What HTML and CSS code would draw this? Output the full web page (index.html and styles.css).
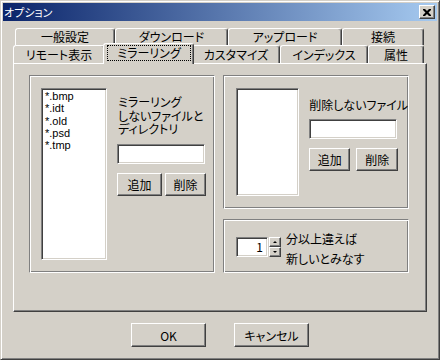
FILE: index.html
```html
<!DOCTYPE html>
<html lang="ja">
<head>
<meta charset="utf-8">
<title>オプション</title>
<link rel="stylesheet" href="styles.css">
</head>
<body>
<div class="window">
  <div class="titlebar">
    <span class="title">オプション</span>
    <div class="close">
      <svg width="8" height="7" viewBox="0 0 8 7"><path d="M0 0h2l2 2 2-2h2v1L5.5 3.5 8 6v1H6L4 5 2 7H0V6l2.5-2.5L0 1z" fill="#000"/></svg>
    </div>
  </div>
  <div class="tabs">
    <div class="tabrow back">
      <div class="tab t-a">一般設定</div>
      <div class="tab t-b">ダウンロード</div>
      <div class="tab t-c">アップロード</div>
      <div class="tab t-d">接続</div>
    </div>
    <div class="tabrow front">
      <div class="tab t-e">リモート表示</div>
      <div class="tab t-f selected"><div class="focus">ミラーリング</div></div>
      <div class="tab t-g">カスタマイズ</div>
      <div class="tab t-h">インデックス</div>
      <div class="tab t-i">属性</div>
    </div>
  </div>
  <div class="panel">
    <div class="group g-left">
      <div class="field list list-left">
        <div class="item">*.bmp</div>
        <div class="item">*.idt</div>
        <div class="item">*.old</div>
        <div class="item">*.psd</div>
        <div class="item">*.tmp</div>
      </div>
      <div class="side side-left">
        <div class="label multi">ミラーリング<br>しないファイルと<br>ディレクトリ</div>
        <div class="field edit"></div>
        <div class="btns btns-left">
          <div class="btn b-add-l">追加</div>
          <div class="btn b-del-l">削除</div>
        </div>
      </div>
    </div>
    <div class="col-right">
      <div class="group g-top">
        <div class="field list list-right"></div>
        <div class="side side-right">
          <div class="label">削除しないファイル</div>
          <div class="field edit edit-right"></div>
          <div class="btns btns-right">
            <div class="btn b-add-r">追加</div>
            <div class="btn b-del-r">削除</div>
          </div>
        </div>
      </div>
      <div class="group g-bottom">
        <div class="spin">
          <div class="field spin-edit">1</div>
          <div class="spin-btns">
            <div class="sbtn"><span class="arrow up"></span></div>
            <div class="sbtn"><span class="arrow down"></span></div>
          </div>
        </div>
        <div class="spin-text">分以上違えば<br>新しいとみなす</div>
      </div>
    </div>
  </div>
  <div class="footer">
    <div class="btn big">OK</div>
    <div class="btn big">キャンセル</div>
  </div>
</div>
</body>
</html>
```

FILE: styles.css
```css
* { box-sizing: border-box; }
html, body { margin: 0; padding: 0; }
body {
  width: 440px;
  height: 360px;
  background: #d4d0c8;
  font-family: "Noto Sans CJK JP", "Noto Sans", sans-serif;
  font-size: 12px;
  color: #000;
  font-feature-settings: "palt";
}
.window {
  width: 440px;
  height: 360px;
  background: #d4d0c8;
  border: 1px solid;
  border-color: #d4d0c8 #404040 #404040 #d4d0c8;
  box-shadow: inset 1px 1px #fff, inset -1px -1px #808080;
  padding: 2px;
  display: flex;
  flex-direction: column;
}
.titlebar {
  height: 18px;
  background: linear-gradient(to right, #0a246a, #a6caf0);
  display: flex;
  align-items: center;
  justify-content: space-between;
  padding: 0 2px 0 1px;
}
.title {
  color: #fff;
  font-size: 11px;
  line-height: 18px;
}
.close {
  width: 16px;
  height: 14px;
  background: #d4d0c8;
  border: 1px solid;
  border-color: #fff #404040 #404040 #fff;
  box-shadow: inset -1px -1px #808080;
  display: flex;
  align-items: center;
  justify-content: center;
}
.close svg { display: block; margin-left: -1px; }

.tabs { margin-top: 7px; }
.tabrow { display: flex; align-items: flex-start; }
.back { padding-left: 12px; height: 17px; }
.front { padding-left: 10px; height: 18px; }
.tab {
  border: 1px solid;
  border-bottom: none;
  border-color: #fff #404040 transparent #fff;
  box-shadow: inset -1px 0 #808080;
  border-radius: 3px 3px 0 0;
  text-align: center;
  background: #d4d0c8;
  white-space: nowrap;
}
.back .tab { height: 17px; line-height: 16px; }
.front .tab { height: 18px; line-height: 17px; }
.t-a { width: 100px; }
.t-b { width: 113px; }
.t-c { width: 114px; }
.t-d { width: 82px; }
.t-e { width: 92px; }
.t-f { width: 87px; }
.t-g { width: 88px; }
.t-h { width: 88px; }
.t-i { width: 56px; }
.front .tab.selected {
  width: 91px;
  height: 21px;
  margin: -2px -2px 0;
  position: relative;
  z-index: 1;
}
.focus {
  border: 1px dotted #000;
  height: 16px;
  line-height: 14px;
  margin: 1px 2px 0 3px;
}

.panel {
  margin-left: 10px;
  width: 414px;
  height: 249px;
  border: 1px solid;
  border-color: #fff #404040 #404040 #fff;
  box-shadow: inset -1px -1px #808080;
  padding: 11px 0 0 15px;
  display: flex;
  align-items: flex-start;
  gap: 8px;
}
.group {
  border: 1px solid;
  border-color: #808080 #fff #fff #808080;
  box-shadow: inset 1px 1px #fff, inset -1px -1px #808080;
  display: flex;
  align-items: flex-start;
}
.field {
  background: #fff;
  border: 1px solid;
  border-color: #808080 #fff #fff #808080;
  box-shadow: inset 1px 1px #404040, inset -1px -1px #d4d0c8;
}
.btn {
  height: 23px;
  border: 1px solid;
  border-color: #fff #404040 #404040 #fff;
  box-shadow: inset -1px -1px #808080;
  display: flex;
  align-items: center;
  justify-content: center;
}
.label { line-height: 13.5px; white-space: nowrap; }
.side { display: flex; flex-direction: column; align-items: flex-start; }
.btns { display: flex; }

.g-left { width: 186px; height: 198px; padding: 12px 0 0 11px; }
.list-left { width: 66px; height: 172px; padding: 1px 0 0 3px; }
.item {
  font-family: "Liberation Sans", Arial, sans-serif;
  font-size: 11px;
  height: 12.3px;
  line-height: 12.3px;
}
.side-left { margin-left: 10px; }
.label.multi {
  font-family: "Liberation Serif", "Noto Sans CJK JP", sans-serif;
  margin-top: 9px;
  padding-left: 1px;
}
.edit { width: 88px; height: 20px; margin-top: 6px; }
.btns-left { margin-top: 9px; gap: 3px; }
.b-add-l { width: 45px; }
.b-del-l { width: 41px; }

.col-right { display: flex; flex-direction: column; gap: 10px; width: 186px; }
.g-top { width: 186px; height: 134px; padding: 12px 0 0 12px; }
.list-right { width: 65px; height: 108px; }
.side-right { margin-left: 10px; }
.side-right .label { margin-top: 10px; }
.edit-right { margin-top: 7px; }
.btns-right { margin-top: 9px; gap: 6px; }
.b-add-r { width: 41px; }
.b-del-r { width: 42px; }

.g-bottom { width: 186px; height: 54px; padding: 0 0 0 12px; align-items: center; }
.spin { display: flex; margin-top: 2px; }
.spin-edit { width: 32px; height: 20px; text-align: right; padding-right: 4px; line-height: 18px; }
.spin-btns { display: flex; flex-direction: column; width: 12px; height: 20px; margin-left: 1px; }
.sbtn {
  flex: 1;
  border: 1px solid;
  border-color: #fff #404040 #404040 #fff;
  box-shadow: inset -1px -1px #808080;
  display: flex;
  align-items: center;
  justify-content: center;
}
.arrow { width: 0; height: 0; border-left: 2px solid transparent; border-right: 2px solid transparent; }
.arrow.up { border-bottom: 2px solid #000; }
.arrow.down { border-top: 2px solid #000; }
.spin-text { margin-left: 5px; line-height: 20px; margin-top: 6px; white-space: nowrap; }

.footer { display: flex; justify-content: center; gap: 28px; margin-top: 11px; }
.btn.big { width: 75px; height: 24px; }
```
